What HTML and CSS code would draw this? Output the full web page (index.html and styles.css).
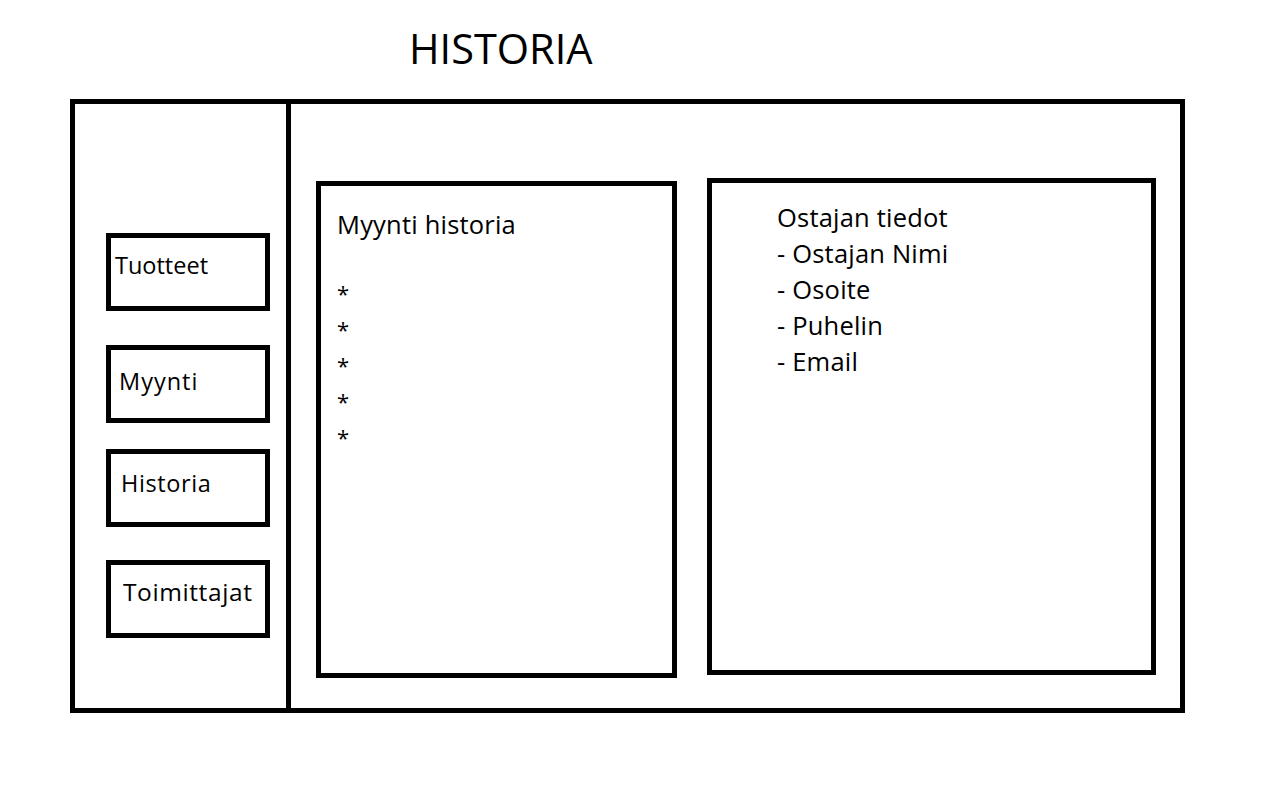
FILE: index.html
```html
<!DOCTYPE html>
<html>
<head>
  <title>Historia</title>
  <link rel="stylesheet" href="styles.css">
</head>
<body>
  <h1 class="title">HISTORIA</h1>

  <div class="frame">
    <div class="sidebar">
      <div class="nav-item nav-1">Tuotteet</div>
      <div class="nav-item nav-2">Myynti</div>
      <div class="nav-item nav-3">Historia</div>
      <div class="nav-item nav-4">Toimittajat</div>
    </div>

    <div class="content">
      <div class="panel sales">
        <div class="panel-title">Myynti historia</div>
        <div class="stars">
          <div>*</div>
          <div>*</div>
          <div>*</div>
          <div>*</div>
          <div>*</div>
        </div>
      </div>

      <div class="panel buyer">
        <div>Ostajan tiedot</div>
        <div>- Ostajan Nimi</div>
        <div>- Osoite</div>
        <div>- Puhelin</div>
        <div>- Email</div>
      </div>
    </div>
  </div>
</body>
</html>
```

FILE: styles.css
```css
body {
  margin: 0;
  font-family: "Open Sans", Arial, sans-serif;
  color: #000;
  background-color: #fff;
}
.title {
  margin: 0;
  height: 99px;
  padding-left: 409px;
  font-size: 41.5px;
  font-weight: normal;
  line-height: 96px;
  box-sizing: border-box;
}
.frame {
  display: flex;
  margin-left: 70px;
  width: 1115px;
  height: 614px;
  border: 5px solid #000;
  box-sizing: border-box;
}
.sidebar {
  width: 216px;
  border-right: 5px solid #000;
  box-sizing: border-box;
  padding: 129px 0 0 31px;
}
.nav-item {
  width: 164px;
  height: 78px;
  border: 5px solid #000;
  box-sizing: border-box;
  font-size: 23.5px;
  line-height: 28px;
  padding: 13px 0 0 4px;
  white-space: nowrap;
}
.nav-2 {
  margin-top: 34px;
  padding-left: 8px;
  padding-top: 17px;
  letter-spacing: 1px;
}
.nav-3 {
  margin-top: 26px;
  padding-left: 10px;
  padding-top: 15px;
  letter-spacing: 0.6px;
}
.nav-4 {
  margin-top: 33px;
  padding-left: 12px;
  padding-top: 13px;
  font-size: 24.5px;
  letter-spacing: 0.6px;
}
.content {
  flex: 1;
  display: flex;
  align-items: flex-start;
  padding-left: 25px;
}
.panel {
  height: 497px;
  border: 5px solid #000;
  box-sizing: border-box;
  font-size: 25.5px;
  line-height: 36px;
  letter-spacing: 0.2px;
}
.sales {
  width: 361px;
  margin-top: 77px;
  padding: 20px 0 0 16px;
}
.stars {
  margin-top: 33px;
  font-size: 22px;
}
.buyer {
  width: 449px;
  margin-top: 74px;
  margin-left: 30px;
  padding: 16px 0 0 65px;
}
```
